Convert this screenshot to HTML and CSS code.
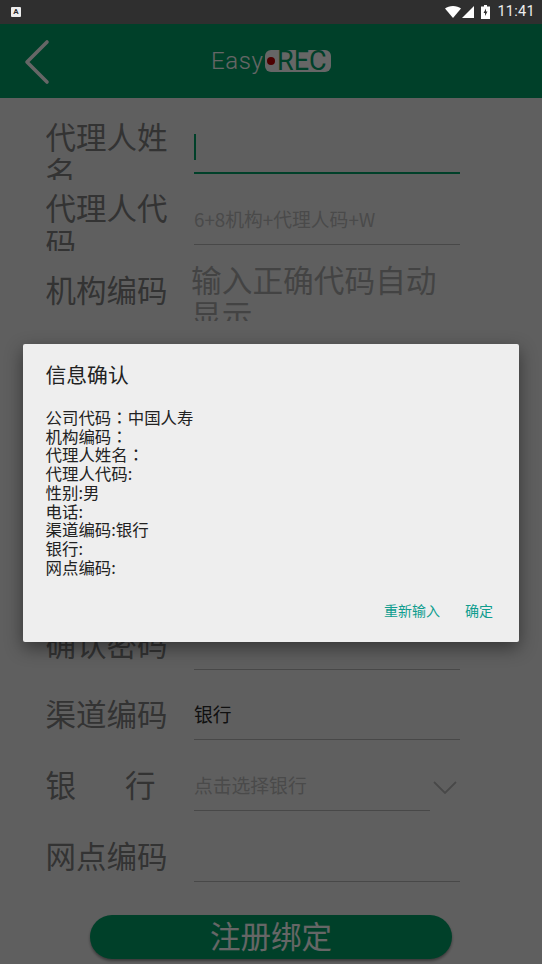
FILE: index.html
```html
<!DOCTYPE html>
<html lang="zh-CN">

<head>
    <meta charset="UTF-8">
    <meta name="viewport" content="width=device-width, initial-scale=1.0">
    <title>EasyREC</title>
    <link rel="stylesheet" href="styles.css">
</head>

<body>
    <div class="status-bar">
        <span class="status-app">A</span>
        <div class="status-right">
            <svg class="wifi-icon" viewBox="0 0 16 12"><path d="M0 2.6C2 .9 4.8 0 8 0s6 .9 8 2.6L8 12z" fill="#fff"/></svg>
            <svg class="signal-icon" viewBox="0 0 12 12"><path d="M12 0v12H0z" fill="#fff"/></svg>
            <svg class="battery-icon" viewBox="0 0 9 14"><path d="M3 0h3v1.5h3V14H0V1.5h3z" fill="#fff"/><path d="M5 3.5 2.5 8H4v3l2.5-4.500H5z" fill="#2f2f2f"/></svg>
            <span class="status-time">11:41</span>
        </div>
    </div>

    <header class="app-header">
        <svg class="back-icon" viewBox="0 0 26 46"><path d="M23 3 3 23l20 20" fill="none" stroke="#fff" stroke-width="3.600" stroke-linecap="round" stroke-linejoin="round"/></svg>
        <div class="logo">
            <span class="logo-easy">Easy</span>
            <span class="logo-pill"><i class="logo-dot"></i>REC</span>
        </div>
    </header>

    <main class="form">
        <div class="row">
            <div class="label">代理人姓名</div>
            <div class="field field-focus"><i class="caret"></i></div>
        </div>
        <div class="row">
            <div class="label">代理人代码</div>
            <div class="field placeholder">6+8机构+代理人码+W</div>
        </div>
        <div class="row">
            <div class="label label-single">机构编码</div>
            <div class="field-auto">输入正确代码自动显示</div>
        </div>
        <div class="row">
            <div class="label label-single">性别</div>
            <div class="field"></div>
        </div>
        <div class="row">
            <div class="label label-single">电话</div>
            <div class="field"></div>
        </div>
        <div class="row">
            <div class="label label-single">验证码</div>
            <div class="field"></div>
        </div>
        <div class="row">
            <div class="label label-single">设置密码</div>
            <div class="field"></div>
        </div>
        <div class="row">
            <div class="label label-single">确认密码</div>
            <div class="field"></div>
        </div>
        <div class="row">
            <div class="label label-single">渠道编码</div>
            <div class="field value">银行</div>
        </div>
        <div class="row">
            <div class="label label-single label-spread"><span>银</span><span>行</span></div>
            <div class="field field-short placeholder">点击选择银行</div>
            <svg class="select-icon" viewBox="0 0 24 13"><path d="M1 1l11 11L23 1" fill="none" stroke="#b5b5b5" stroke-width="1.800"/></svg>
        </div>
        <div class="row">
            <div class="label label-single">网点编码</div>
            <div class="field"></div>
        </div>
        <button class="submit-btn">注册绑定</button>
    </main>

    <div class="scrim"></div>

    <div class="dialog">
        <h2 class="dialog-title">信息确认</h2>
        <div class="dialog-body">
            <div>公司代码<span class="colon" lang="zh-TW">：</span>中国人寿</div>
            <div>机构编码<span class="colon" lang="zh-TW">：</span></div>
            <div>代理人姓名<span class="colon" lang="zh-TW">：</span></div>
            <div>代理人代码:</div>
            <div>性别:男</div>
            <div>电话:</div>
            <div>渠道编码:银行</div>
            <div>银行:</div>
            <div>网点编码:</div>
        </div>
        <div class="dialog-actions">
            <span class="dialog-btn">重新输入</span>
            <span class="dialog-btn">确定</span>
        </div>
    </div>
</body>
</html>
```

FILE: styles.css
```css
* {
    box-sizing: border-box;
}

html, body {
    margin: 0;
    height: 964px;
    overflow: hidden;
}

body {
    font-family: "Noto Sans CJK SC", "Noto Sans", sans-serif;
    background-color: #eee;
    position: relative;
}

/* status bar sits above the dialog scrim */
.status-bar {
    position: relative;
    z-index: 3;
    height: 24px;
    background-color: #2f2f2f;
    display: flex;
    align-items: center;
    justify-content: space-between;
    padding: 0 7px 1px 11px;
}

.status-app {
    width: 10px;
    height: 10px;
    background-color: #eee;
    border-radius: 1px;
    color: #2f2f2f;
    font-family: "Roboto", sans-serif;
    font-size: 8px;
    font-weight: 700;
    line-height: 10px;
    text-align: center;
}

.status-right {
    display: flex;
    align-items: center;
}

.wifi-icon {
    width: 16px;
    height: 12px;
    margin-right: 1px;
}

.signal-icon {
    width: 12px;
    height: 12px;
    margin-right: 7px;
}

.battery-icon {
    width: 9px;
    height: 14px;
    margin-right: 7px;
}

.status-time {
    font-family: "Roboto", sans-serif;
    font-size: 14.500px;
    color: #eee;
    letter-spacing: 0.3px;
}

.app-header {
    height: 74px;
    background-color: #00a068;
    position: relative;
    display: flex;
    align-items: center;
    justify-content: center;
}

.back-icon {
    position: absolute;
    left: 24px;
    top: 15px;
    width: 26px;
    height: 46px;
}

.logo {
    display: flex;
    align-items: center;
    margin-top: -1px;
}

.logo-easy {
    font-family: "Roboto", sans-serif;
    font-weight: 300;
    font-size: 24px;
    line-height: 22px;
    color: #fff;
    width: 54px;
    letter-spacing: 0.6px;
}

.logo-pill {
    width: 66px;
    height: 22px;
    background-color: #fff;
    border-radius: 6px;
    display: flex;
    align-items: center;
    padding-left: 2px;
    font-family: "Roboto", sans-serif;
    font-size: 27px;
    font-weight: 400;
    color: #00a068;
}

.logo-dot {
    width: 8px;
    height: 8px;
    border-radius: 50%;
    background-color: #c00000;
    margin-right: 2px;
}

.form {
    padding-top: 5px;
}

.row {
    height: 70.800px;
    padding-left: 45.500px;
    display: flex;
    align-items: flex-start;
    position: relative;
}

.label {
    width: 123px;
    height: 61px;
    margin-top: 16px;
    margin-right: 25.500px;
    overflow: hidden;
    font-size: 30.500px;
    line-height: 35px;
    color: #808080;
}

.label-single {
    padding-top: 11px;
}

.label-spread {
    display: flex;
    gap: 49px;
}

.field {
    width: 266px;
    height: 71px;
    padding-top: 29px;
    border-bottom: 1.500px solid #b3b3b3;
    font-size: 18.800px;
    line-height: 32px;
    position: relative;
}

.field-focus {
    border-bottom: 2px solid #00a068;
}

.field-short {
    width: 236px;
}

.placeholder {
    color: #b8b8b8;
}

.value {
    color: #2a2a2a;
}

.caret {
    position: absolute;
    left: 0;
    top: 31px;
    width: 1.500px;
    height: 26px;
    background-color: #00a068;
}

.field-auto {
    width: 266px;
    height: 76px;
    margin-left: -3px;
    padding-top: 16px;
    overflow: hidden;
    font-size: 30.700px;
    line-height: 35px;
    color: #a8a8a8;
}

.select-icon {
    width: 24px;
    height: 13px;
    margin-top: 41px;
    margin-left: 3px;
}

.submit-btn {
    display: block;
    width: 362px;
    height: 44px;
    margin: 33px 0 0 90px;
    border: none;
    border-radius: 22px;
    background-color: #00a068;
    box-shadow: 0 2px 3px rgba(0, 0, 0, 0.4);
    color: #fff;
    font-family: inherit;
    font-size: 30.500px;
    line-height: 40px;
    padding: 0 0 4px;
}

.scrim {
    position: absolute;
    top: 24px;
    left: 0;
    right: 0;
    bottom: 0;
    z-index: 1;
    background-color: rgba(0, 0, 0, 0.6);
}

.dialog {
    position: absolute;
    z-index: 2;
    left: 23px;
    top: 344px;
    width: 496px;
    height: 298px;
    padding: 15px 23px 0 22.500px;
    background-color: #eee;
    border-radius: 2px;
    box-shadow: 0 6px 18px rgba(0, 0, 0, 0.45);
    display: flex;
    flex-direction: column;
}

.dialog-title {
    margin: 0;
    font-size: 20.800px;
    font-weight: 400;
    line-height: 30px;
    color: #222;
}

.dialog-body {
    margin-top: 19px;
    font-size: 16.450px;
    line-height: 18.700px;
    color: #222;
}

.colon {
    font-family: "Noto Sans CJK TC", sans-serif;
}

.dialog-actions {
    display: flex;
    justify-content: flex-end;
    gap: 25px;
    margin-top: 24px;
    padding-right: 3px;
}

.dialog-btn {
    font-size: 14px;
    line-height: 20px;
    color: #0f9d8e;
}
```
